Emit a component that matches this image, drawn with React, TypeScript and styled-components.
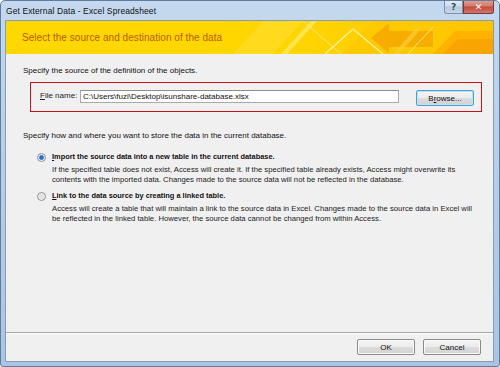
import React from "react";
import styled, { createGlobalStyle } from "styled-components";

const Global = createGlobalStyle`
  html, body { margin: 0; padding: 0; background: #ffffff; }
  body { font-family: "Liberation Sans", Arial, sans-serif; }
  * { box-sizing: border-box; }
`;

const Window = styled.div`
  width: 500px;
  height: 367px;
  display: flex;
  flex-direction: column;
  background: linear-gradient(180deg, #c4d9ef 0%, #b9d1ea 30%, #a9c5e4 100%);
  border: 1px solid #5f7d9e;
  border-radius: 5px 5px 3px 3px;
  padding: 0 5px 4px 4px;
  overflow: hidden;
`;

const TitleBar = styled.div`
  height: 19px;
  display: flex;
  align-items: center;
  justify-content: space-between;
  padding-left: 1px;
`;

const TitleText = styled.span`
  font-size: 8.5px;
  color: #111;
  letter-spacing: 0.1px;
  margin-top: 1px;
`;

const Caption = styled.div`
  display: flex;
  align-self: flex-start;
  margin-top: -1px;
`;

const CapButton = styled.div<{ $w: number; $close?: boolean }>`
  width: ${(p) => p.$w}px;
  height: 14px;
  display: flex;
  align-items: center;
  justify-content: center;
  border: 1px solid ${(p) => (p.$close ? "#7a3a3a" : "#7890a8")};
  border-top: none;
  border-radius: ${(p) => (p.$close ? "0 0 3px 0" : "0 0 0 3px")};
  background: ${(p) =>
    p.$close
      ? "linear-gradient(180deg, #e6a195 0%, #d47a6c 45%, #c24b3c 55%, #d0786a 100%)"
      : "linear-gradient(180deg, #e6eef7 0%, #cfdceb 45%, #b7c9de 55%, #c7d7e9 100%)"};
  color: ${(p) => (p.$close ? "#ffffff" : "#3a4a5c")};
  font-size: 9px;
  font-weight: bold;
  font-family: "DejaVu Sans", sans-serif;
`;

const Client = styled.div`
  flex: 1;
  display: flex;
  flex-direction: column;
  background: #f0f0f0;
  border: 1px solid #8a9bb0;
`;

const Banner = styled.div`
  position: relative;
  height: 33px;
  display: flex;
  align-items: center;
  padding-left: 16px;
  background: linear-gradient(90deg, #ffd800 0%, #ffd500 60%, #ffc400 100%);
  overflow: hidden;
`;

const BannerArt = styled.svg`
  position: absolute;
  right: 0;
  top: 0;
`;

const BannerTitle = styled.h1`
  position: relative;
  margin: 0;
  font-size: 10px;
  font-weight: normal;
  color: #b85c00;
  letter-spacing: 0.05px;
`;

const Body = styled.div`
  flex: 1;
  display: flex;
  flex-direction: column;
  padding: 12px 11px 0 17px;
  font-size: 8px;
  color: #111;
  white-space: nowrap;
`;

const Paragraph = styled.div<{ $mt?: number }>`
  line-height: 10px;
  margin-top: ${(p) => p.$mt ?? 0}px;
`;

const Highlight = styled.div`
  margin: 6px 0 0 7px;
  height: 30px;
  border: 1.5px solid #c8101a;
  display: flex;
  align-items: flex-start;
  padding: 7px 0 0 9px;
`;

const FieldLabel = styled.label`
  width: 40px;
  line-height: 10px;
  margin-top: 1px;
  color: #222;
`;

const Input = styled.div`
  width: 319px;
  height: 13px;
  background: #ffffff;
  border: 1px solid #a9a9a9;
  border-top-color: #8e8e8e;
  display: flex;
  align-items: center;
  padding-left: 2px;
  line-height: 10px;
`;

const Btn = styled.div<{ $focus?: boolean }>`
  width: 58px;
  height: 16px;
  display: flex;
  align-items: center;
  justify-content: center;
  border: 1px solid ${(p) => (p.$focus ? "#4f9fd0" : "#8a8a8a")};
  border-radius: 2px;
  background: linear-gradient(180deg, #f4f4f4 0%, #ececec 48%, #dcdcdc 52%, #d2d2d2 100%);
  box-shadow: inset 0 0 0 1px ${(p) => (p.$focus ? "#b8e2f7" : "#fbfbfb")};
  font-size: 8px;
  color: #111;
`;

const BrowseBtn = styled(Btn)`
  margin-left: 17px;
`;

const Options = styled.div`
  display: flex;
  flex-direction: column;
  margin: 11px 0 0 16px;
  gap: 6px;
`;

const Option = styled.div`
  display: grid;
  grid-template-columns: 13px 1fr;
  row-gap: 3px;
  align-items: center;
`;

const Radio = styled.span<{ $on?: boolean }>`
  width: 9px;
  height: 9px;
  border-radius: 50%;
  margin-left: -2px;
  border: 1px solid #8e8f8f;
  background: ${(p) =>
    p.$on
      ? "radial-gradient(circle, #2a6cc4 0 1.8px, #7fb2e8 2.4px, #f4f4f4 2.9px)"
      : "radial-gradient(circle, #e2e2e2 0 2px, #f6f6f6 3.5px)"};
  display: block;
`;

const OptTitle = styled.div`
  font-weight: bold;
  font-size: 7.4px;
  line-height: 10px;
`;

const OptDesc = styled.div`
  grid-column: 2;
  font-size: 7.7px;
  line-height: 10px;
  color: #222;
`;

const U = styled.span`
  text-decoration: underline;
`;

const Separator = styled.div`
  height: 2px;
  border-top: 1px solid #a6a6a6;
  border-bottom: 1px solid #ffffff;
`;

const Footer = styled.div`
  height: 27px;
  display: flex;
  justify-content: flex-end;
  align-items: flex-start;
  gap: 8px;
  padding: 5px 12px 0 0;
`;

export default function App() {
  return (
    <>
      <Global />
      <Window>
        <TitleBar>
          <TitleText>Get External Data - Excel Spreadsheet</TitleText>
          <Caption>
            <CapButton $w={19}>?</CapButton>
            <CapButton $w={31} $close>✕</CapButton>
          </Caption>
        </TitleBar>
        <Client>
          <Banner>
            <BannerArt width="300" height="33" viewBox="0 0 300 33">
              <polygon points="40,33 70,0 110,0 80,33" fill="#ffe040" opacity="0.45" />
              <polygon points="88,33 118,0 124,0 94,33" fill="#fff3a0" opacity="0.5" />
              <polygon points="150,33 180,0 270,0 240,33" fill="#ffc800" opacity="0.7" />
              <line x1="132" y1="33" x2="160" y2="8" stroke="#fff2a0" strokeWidth="1.2" />
              <line x1="160" y1="8" x2="190" y2="33" stroke="#fff2a0" strokeWidth="1.2" />
              <line x1="110" y1="0" x2="148" y2="33" stroke="#ffe680" strokeWidth="1" />
              <polygon points="178,17 196,2 196,10 240,10 240,26 196,26 196,32" fill="#f5a800" opacity="0.85" />
              <polygon points="200,33 222,8 228,8 206,33" fill="#ffd040" opacity="0.6" />
              <polygon points="240,33 262,10 300,10 300,33" fill="#ffb000" opacity="0.9" />
              <polygon points="250,33 265,18 300,18 300,33" fill="#f7a000" opacity="0.8" />
              <line x1="215" y1="33" x2="240" y2="6" stroke="#fff0a0" strokeWidth="0.8" />
            </BannerArt>
            <BannerTitle>Select the source and destination of the data</BannerTitle>
          </Banner>
          <Body>
            <Paragraph>Specify the source of the definition of the objects.</Paragraph>
            <Highlight>
              <FieldLabel>
                <U>F</U>ile name:
              </FieldLabel>
              <Input>C:\Users\fuzi\Desktop\isunshare-database.xlsx</Input>
              <BrowseBtn $focus>
                B<U>r</U>owse...
              </BrowseBtn>
            </Highlight>
            <Paragraph $mt={19}>
              Specify how and where you want to store the data in the current database.
            </Paragraph>
            <Options>
              <Option>
                <Radio $on />
                <OptTitle>
                  <U>I</U>mport the source data into a new table in the current database.
                </OptTitle>
                <OptDesc>
                  If the specified table does not exist, Access will create it. If the specified table already exists, Access might overwrite its
                  <br />
                  contents with the imported data. Changes made to the source data will not be reflected in the database.
                </OptDesc>
              </Option>
              <Option>
                <Radio />
                <OptTitle>
                  <U>L</U>ink to the data source by creating a linked table.
                </OptTitle>
                <OptDesc>
                  Access will create a table that will maintain a link to the source data in Excel. Changes made to the source data in Excel will
                  <br />
                  be reflected in the linked table. However, the source data cannot be changed from within Access.
                </OptDesc>
              </Option>
            </Options>
          </Body>
          <Separator />
          <Footer>
            <Btn>OK</Btn>
            <Btn>Cancel</Btn>
          </Footer>
        </Client>
      </Window>
    </>
  );
}
